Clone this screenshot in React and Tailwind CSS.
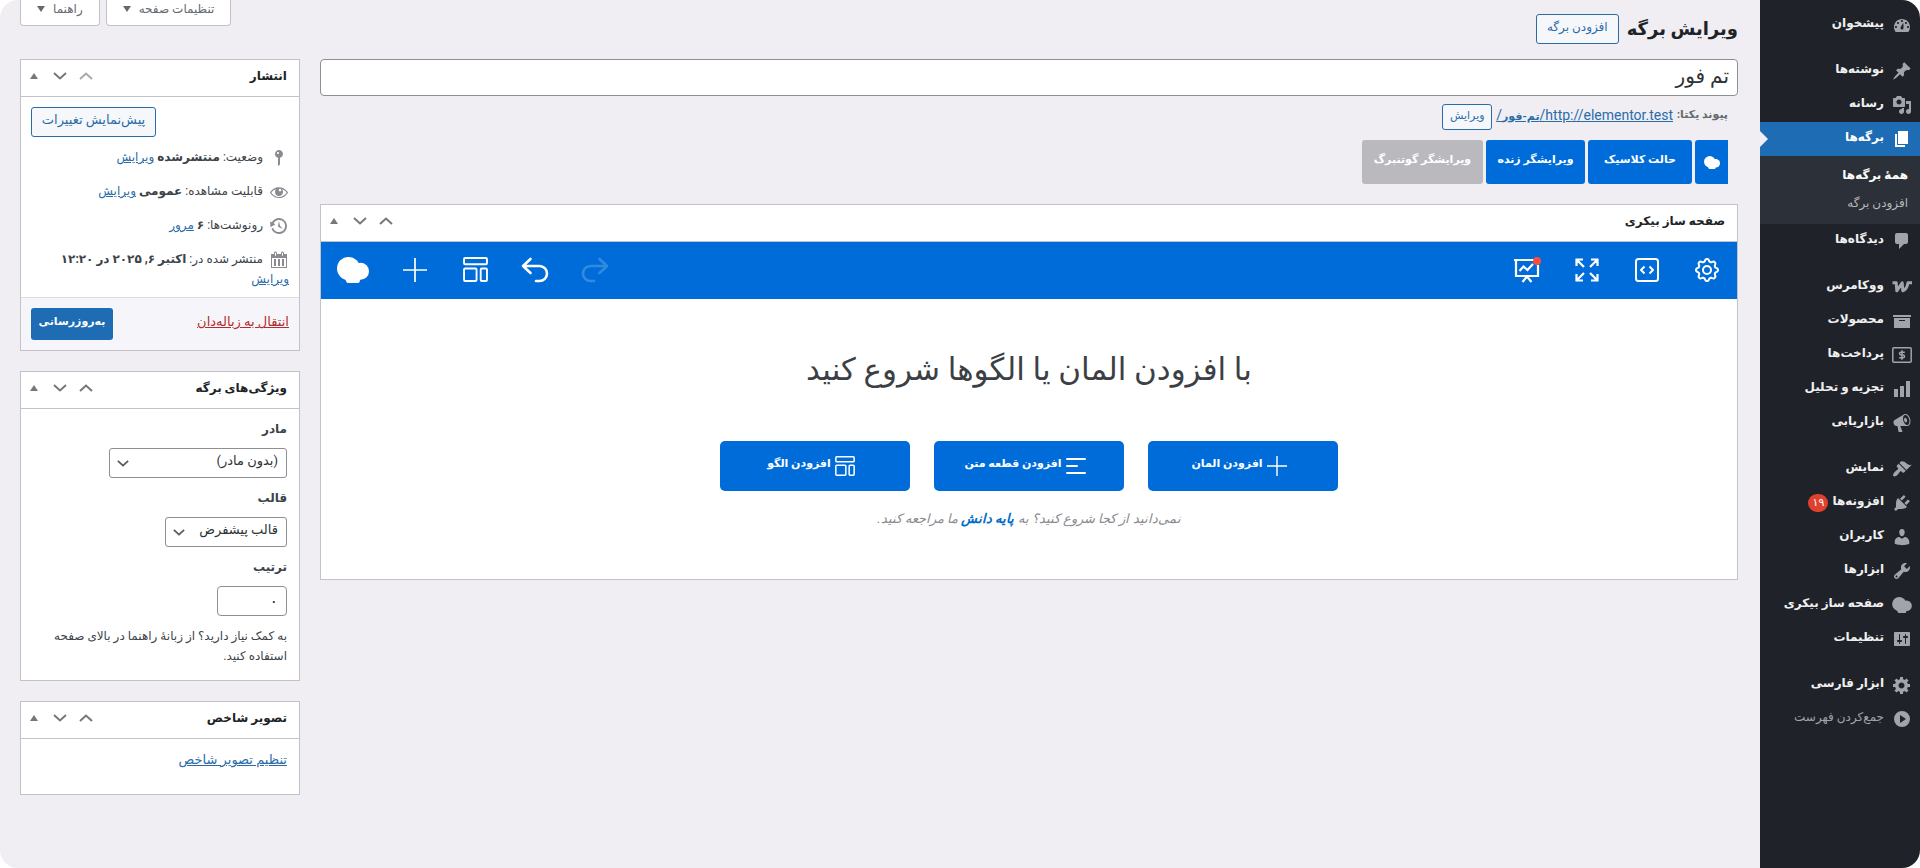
import { useState } from "react"

const dashicons = {
    dashboard: "M3.76 17h12.48A7.96 7.96 0 0 0 18 12c0-4.41-3.58-8-8-8s-8 3.59-8 8c0 1.9.66 3.65 1.76 5zM10 5c.55 0 1 .45 1 1s-.45 1-1 1-1-.45-1-1 .45-1 1-1zM6 7c.55 0 1 .45 1 1s-.45 1-1 1-1-.45-1-1 .45-1 1-1zm8 0c.55 0 1 .45 1 1s-.45 1-1 1-1-.45-1-1 .45-1 1-1zm-2.6.8c0 2.3.1 4.1.1 5.2a1.5 1.5 0 1 1-2.9-.5c.4-1.2 1.5-2.7 2.8-4.7zM4 11c.55 0 1 .45 1 1s-.45 1-1 1-1-.45-1-1 .45-1 1-1zm12 0c.55 0 1 .45 1 1s-.45 1-1 1-1-.45-1-1 .45-1 1-1z",
    post: "M10.44 3.02l1.82-1.82 6.36 6.35-1.83 1.82c-1.05-.68-2.48-.57-3.41.36l-.75.75c-.92.93-1.04 2.35-.35 3.41l-1.83 1.82-2.41-2.41-2.8 2.79c-.42.42-3.38 2.71-3.8 2.29s1.86-3.39 2.28-3.81l2.79-2.79L4.1 9.36l1.83-1.82c1.05.69 2.48.57 3.4-.36l.75-.75c.93-.92 1.05-2.35.36-3.41z",
    media: "M13 11V4c0-.55-.45-1-1-1h-1.67L9 1H5L3.67 3H2c-.55 0-1 .45-1 1v7c0 .55.45 1 1 1h10c.55 0 1-.45 1-1zM7 4.5c1.38 0 2.5 1.12 2.5 2.5S8.38 9.5 7 9.5 4.5 8.38 4.5 7 5.62 4.5 7 4.5zM14 6h5v10.5c0 1.38-1.12 2.5-2.5 2.5S14 17.88 14 16.5s1.12-2.5 2.5-2.5c.17 0 .34.02.5.05V9h-3V6zm-4 8.05V13h2v3.5c0 1.38-1.12 2.5-2.5 2.5S7 17.88 7 16.5 8.12 14 9.5 14c.17 0 .34.02.5.05z",
    page: "M6 15V2h10v13H6zm-1 1h8v2H3V5h2v11z",
    comments: "M5 2h9c1.1 0 2 .9 2 2v7c0 1.1-.9 2-2 2h-2l-5 5v-5H5c-1.1 0-2-.9-2-2V4c0-1.1.9-2 2-2z",
    archive: "M19 4v2H1V4h18zM2 7h16v10H2V7zm11 3V9H7v1h6z",
    chart: "M18 18V2h-4v16h4zm-6 0V7H8v11h4zm-6 0v-8H2v8h4z",
    megaphone: "M18.15 5.94c.46 1.62.38 3.22-.02 4.48-.42 1.28-1.26 2.18-2.3 2.48-.16.06-.26.06-.4.06-.06.02-.12.02-.18.02-.06.02-.14.02-.22.02h-6.8l2.22 5.5c.02.14-.06.26-.14.34-.08.1-.24.16-.34.16H6.95c-.1 0-.26-.06-.34-.16-.08-.08-.16-.2-.14-.34l-1-5.5H4.25l-.02-.02c-.5.06-1.08-.18-1.54-.62s-.88-1.08-1.06-1.88c-.24-.8-.2-1.56-.02-2.2.18-.62.58-1.08 1.06-1.3l.02-.02 9-5.4c.1-.06.18-.1.24-.16.06-.04.14-.08.24-.12.16-.08.28-.12.5-.18 1.04-.3 2.24.1 3.22.98s1.84 2.24 2.26 3.86zm-2.58 5.98h-.02c.4-.1.74-.34 1.04-.7.58-.7.86-1.76.86-3.04 0-.64-.1-1.3-.28-1.98-.34-1.36-1.02-2.5-1.78-3.24s-1.68-1.1-2.46-.88c-.82.22-1.4.96-1.7 2-.32 1.04-.28 2.36.06 3.72.38 1.36 1 2.5 1.8 3.24.78.74 1.62 1.1 2.48.88zm-2.54-7.08c.22-.04.42-.02.62.04.38.16.76.48 1.02 1s.42 1.2.42 1.78c0 .3-.04.56-.12.8-.18.48-.44.84-.86.94-.34.1-.8-.06-1.14-.4s-.64-.86-.78-1.5c-.18-.62-.12-1.24.02-1.72s.48-.84.82-.94z",
    appearance: "M14.48 11.06L7.41 3.99l1.5-1.5c.5-.56 2.3-.47 3.51.32 1.21.8 1.43 1.28 2.91 2.1 1.18.64 2.45 1.26 4.45.85zm-.71.71L6.7 4.7 4.93 6.47c-.39.39-.39 1.02 0 1.41l1.06 1.06c.39.39.39 1.03 0 1.42-.6.6-1.43 1.11-2.21 1.69-.35.26-.7.53-1.01.84C1.43 14.23.4 16.08 1.4 17.07c.99 1 2.84-.03 4.18-1.36.31-.31.58-.66.85-1.02.57-.78 1.08-1.61 1.69-2.21.39-.39 1.02-.39 1.41 0l1.06 1.06c.39.39 1.02.39 1.41 0z",
    plugins: "M13.11 4.36L9.87 7.6 8 5.73l3.24-3.24c.35-.34 1.05-.2 1.56.32.52.51.66 1.21.31 1.55zm-8 1.77l.91-1.12 9.01 9.01-1.19.84c-.71.71-2.63 1.16-3.82 1.16H6.14L4.9 17.26c-.59.59-1.54.59-2.12 0-.59-.58-.59-1.53 0-2.12l1.24-1.24v-3.88c0-1.13.4-3.19 1.09-3.89zm7.26 3.97l3.24-3.24c.34-.35 1.04-.21 1.55.31.52.51.66 1.21.31 1.55l-3.24 3.25z",
    users: "M10 9.25c-2.27 0-2.73-3.44-2.73-3.44C7 4.02 7.82 2 9.97 2c2.16 0 2.98 2.02 2.71 3.81 0 0-.41 3.44-2.68 3.44zm0 2.57L12.72 10c2.39 0 4.52 2.33 4.52 4.53v2.49s-3.65 1.13-7.24 1.13c-3.65 0-7.24-1.13-7.24-1.13v-2.49c0-2.25 1.94-4.48 4.47-4.48z",
    tools: "M16.68 9.77c-1.34 1.34-3.3 1.67-4.95.99l-5.41 6.52c-.99.99-2.59.99-3.58 0s-.99-2.59 0-3.57l6.52-5.42c-.68-1.65-.35-3.61.99-4.95 1.28-1.28 3.12-1.62 4.72-1.06l-2.89 2.89 2.82 2.82 2.86-2.87c.53 1.58.18 3.39-1.08 4.65zM3.81 16.21c.4.39 1.04.39 1.43 0 .4-.4.4-1.04 0-1.43-.39-.4-1.03-.4-1.43 0-.39.39-.39 1.03 0 1.43z",
    settings: "M18 16V4c0-.55-.45-1-1-1H3c-.55 0-1 .45-1 1v12c0 .55.45 1 1 1h14c.55 0 1-.45 1-1zM8 11h1c.55 0 1 .45 1 1s-.45 1-1 1H8v1.5c0 .28-.22.5-.5.5s-.5-.22-.5-.5V13H6c-.55 0-1-.45-1-1s.45-1 1-1h1V5.5c0-.28.22-.5.5-.5s.5.22.5.5V11zm5-2h-1c-.55 0-1-.45-1-1s.45-1 1-1h1V5.5c0-.28.22-.5.5-.5s.5.22.5.5V7h1c.55 0 1 .45 1 1s-.45 1-1 1h-1v5.5c0 .28-.22.5-.5.5s-.5-.22-.5-.5V9z",
    generic: "M18 12h-2.18c-.17.7-.44 1.35-.81 1.93l1.54 1.54-2.1 2.1-1.54-1.54c-.58.36-1.23.63-1.91.79V19H8v-2.18c-.68-.16-1.33-.43-1.91-.79l-1.54 1.54-2.12-2.12 1.54-1.54c-.36-.58-.63-1.23-.79-1.91H1V9.03h2.17c.16-.7.44-1.35.8-1.94L2.43 5.55l2.1-2.1 1.54 1.54c.58-.37 1.24-.64 1.93-.81V2h3v2.18c.68.16 1.33.43 1.91.79l1.54-1.54 2.12 2.12-1.54 1.54c.36.59.64 1.24.8 1.94H18V12zm-8.5 1.5c1.66 0 3-1.34 3-3s-1.34-3-3-3-3 1.34-3 3 1.34 3 3 3z",
    collapse: "M10 2a8 8 0 1 0 0 16 8 8 0 0 0 0-16zM8 6l6 4-6 4z",
    pin: "M14 6c0 1.86-1.28 3.41-3 3.86V16c0 1-2 2-2 2V9.86c-1.72-.45-3-2-3-3.86 0-2.21 1.79-4 4-4s4 1.79 4 4zM8 5c0 .55.45 1 1 1s1-.45 1-1-.45-1-1-1-1 .45-1 1z",
    eye: "M18.3 9.5C15 4.9 8.5 3.8 3.9 7.2c-1.2.9-2.2 2.1-3 3.4.2.4.5.8.8 1.2 3.3 4.6 9.6 5.6 14.2 2.4.9-.7 1.7-1.4 2.4-2.4.3-.4.5-.8.8-1.2-.3-.4-.5-.8-.8-1.1zm-8.2-2.3c.5-.5 1.3-.5 1.8 0s.5 1.3 0 1.8-1.3.5-1.8 0-.5-1.3 0-1.8zm-.1 7.7c-3.1 0-6-1.6-7.7-4.2C3.5 9 5.1 7.8 7 7.2c-.7.8-1 1.7-1 2.7 0 2.2 1.7 4.1 4 4.1 2.2 0 4.1-1.7 4.1-4v-.1c0-1-.4-2-1.1-2.7 1.9.6 3.5 1.8 4.7 3.5-1.7 2.6-4.6 4.2-7.7 4.2z",
    backup: "M13.65 2.88c3.93 2.01 5.48 6.84 3.47 10.77s-6.83 5.48-10.77 3.47c-1.87-.96-3.2-2.56-3.86-4.4l1.64-1.03c.45 1.57 1.52 2.95 3.08 3.76 3.01 1.54 6.69.35 8.23-2.66 1.55-3.01.36-6.69-2.65-8.24C9.78 3.01 6.1 4.2 4.56 7.21l1.88.97-4.95 3.08-.39-5.82 1.78.91C4.9 2.4 9.75.89 13.65 2.88zm-4.36 7.83C9.11 10.53 9 10.28 9 10c0-.07.03-.12.04-.19h-.01L10 5l.97 4.81L14 13l-4.5-2.12.02-.02c-.08-.04-.16-.09-.23-.15z",
    calendar: "M15 4h3v14H2V4h3V3c0-.83.67-1.5 1.5-1.5S8 2.17 8 3v1h4V3c0-.83.67-1.5 1.5-1.5S15 2.17 15 3v1zM6 3v2.5c0 .28.22.5.5.5s.5-.22.5-.5V3c0-.28-.22-.5-.5-.5S6 2.72 6 3zm7 0v2.5c0 .28.22.5.5.5s.5-.22.5-.5V3c0-.28-.22-.5-.5-.5s-.5.22-.5.5zm4 14V8H3v9h14zM7 16V9H5v7h2zm4 0V9H9v7h2zm4 0V9h-2v7h2z",
}

const menuGroups = [
    [{ label: "پیشخوان", icon: "dashboard" }],
    [
        { label: "نوشته‌ها", icon: "post" },
        { label: "رسانه", icon: "media" },
        { label: "برگه‌ها", icon: "page", submenu: ["همهٔ برگه‌ها", "افزودن برگه"] },
        { label: "دیدگاه‌ها", icon: "comments" },
    ],
    [
        { label: "ووکامرس", icon: "woo" },
        { label: "محصولات", icon: "archive" },
        { label: "پرداخت‌ها", icon: "payments" },
        { label: "تجزیه و تحلیل", icon: "chart" },
        { label: "بازاریابی", icon: "megaphone" },
    ],
    [
        { label: "نمایش", icon: "appearance" },
        { label: "افزونه‌ها", icon: "plugins", count: "۱۹" },
        { label: "کاربران", icon: "users" },
        { label: "ابزارها", icon: "tools" },
        { label: "صفحه ساز بیکری", icon: "bakery" },
        { label: "تنظیمات", icon: "settings" },
    ],
    [{ label: "ابزار فارسی", icon: "generic" }],
]

function Dashicon({ name, className }) {
    return (
        <svg viewBox="0 0 20 20" fill="currentColor" fillRule="evenodd" className={className}>
            <path d={dashicons[name]} />
        </svg>
    )
}

function BakeryLogo({ className }) {
    return (
        <svg viewBox="0 0 32 26" fill="currentColor" className={className}>
            <circle cx="11.5" cy="11.5" r="11.5" />
            <circle cx="23.5" cy="14.3" r="8.5" />
            <path d="M7 20h17l-1.5 5q-.3 1-1.3 1H11q-1 0-1.5-1z" />
        </svg>
    )
}

function MenuIcon({ name }) {
    if (name === "bakery") return <BakeryLogo className="w-5 h-4" />
    if (name === "woo") {
        return (
            <svg viewBox="0 0 20 12" fill="none" stroke="currentColor" strokeWidth="3" strokeLinejoin="round" className="w-5 h-3">
                <path d="M.5 1.8h3.7l.6 8 5.4-8 .6 8q4.200-1.500 5.200-8H20" />
            </svg>
        )
    }
    if (name === "payments") {
        return (
            <svg viewBox="0 0 20 16" fill="none" stroke="currentColor" strokeWidth="1.5" className="w-5 h-4">
                <rect x=".8" y=".8" width="18.4" height="14.4" rx="1" />
                <path d="M12.8 5.2H9q-1.5 0-1.5 1.4T9 8h2q1.5 0 1.5 1.4T11 10.8H7.2M10 3.3v9.4" />
            </svg>
        )
    }
    return <Dashicon name={name} className="w-5 h-5" />
}

function MenuItem({ item }) {
    const active = Boolean(item.submenu)
    return (
        <li>
            <a href="#" className={active ? "relative flex items-center h-[34px] bg-[#1d6cb4] text-white" : "flex items-center h-[34px] text-[#f0f0f1]"}>
                <span className={active ? "w-9 flex justify-center text-white" : "w-9 flex justify-center text-[#a0a4ab]"}>
                    <MenuIcon name={item.icon} />
                </span>
                <span className="text-xs font-semibold whitespace-nowrap pb-1">{item.label}</span>
                {item.count && (
                    <span className="mr-1 w-5 h-[18px] rounded-full bg-[#e0412f] text-white text-[11px] leading-[18px] text-center">{item.count}</span>
                )}
                {active && <span className="absolute left-0 top-[9px] border-y-8 border-y-transparent border-l-8 border-l-[#f0eef3]"></span>}
            </a>
            {active && (
                <ul className="bg-[#2c3038] pt-[5px] pb-[7px] px-3">
                    {item.submenu.map((label, index) => (
                        <li key={label}>
                            <a href="#" className={index === 0 ? "flex items-center h-7 text-xs font-bold text-white" : "flex items-center h-7 text-xs text-[#b4b7bc]"}>{label}</a>
                        </li>
                    ))}
                </ul>
            )}
        </li>
    )
}

function AdminMenu() {
    return (
        <nav className="w-40 shrink-0 bg-[#1f2228] pt-2">
            {menuGroups.map((group, index) => (
                <ul key={index} className={index === menuGroups.length - 1 ? "" : "mb-3"}>
                    {group.map((item) => <MenuItem key={item.label} item={item} />)}
                </ul>
            ))}
            <button type="button" className="flex items-center h-[34px] text-[#a0a4ab]">
                <span className="w-9 flex justify-center"><Dashicon name="collapse" className="w-5 h-5" /></span>
                <span className="text-xs pb-1 whitespace-nowrap">جمع‌کردن فهرست</span>
            </button>
        </nav>
    )
}

function Chevron({ up, className }) {
    return (
        <svg viewBox="0 0 14 8" fill="none" stroke="currentColor" strokeWidth="2" className={className}>
            <path d={up ? "M1 7l6-5.5L13 7" : "M1 1l6 5.5L13 1"} />
        </svg>
    )
}

function Postbox({ title, firstBox, children }) {
    const [isOpen, setIsOpen] = useState(true)
    return (
        <section className="bg-white border border-[#c3c2c9]">
            <header className="flex items-center justify-between h-[37px] border-b border-[#c3c2c9] pr-3">
                <h2 className="text-xs font-semibold text-[#1d2327] pb-1">{title}</h2>
                <div className="flex items-center pb-1 text-[#77767a]">
                    <button type="button" aria-label="انتقال به بالا" className={firstBox ? "w-[26px] h-8 flex items-center justify-center text-[#a9a8ad]" : "w-[26px] h-8 flex items-center justify-center"}>
                        <Chevron up className="w-3.5 h-2" />
                    </button>
                    <button type="button" aria-label="انتقال به پایین" className="w-[26px] h-8 flex items-center justify-center">
                        <Chevron className="w-3.5 h-2" />
                    </button>
                    <button type="button" aria-label="بستن جعبه" onClick={() => setIsOpen(!isOpen)} className="w-[26px] h-8 flex items-center justify-center">
                        <svg viewBox="0 0 8 6" fill="currentColor" className="w-2 h-1.5"><path d="M4 0l4 6H0z" /></svg>
                    </button>
                </div>
            </header>
            {isOpen && children}
        </section>
    )
}

function TemplateIcon({ className }) {
    return (
        <svg viewBox="0 0 24 24" fill="none" stroke="currentColor" strokeWidth="1.8" className={className}>
            <rect x="1" y="1" width="22" height="6" rx="1" />
            <rect x="1" y="11" width="12" height="12" rx="1" />
            <rect x="17" y="11" width="6" height="12" rx="1" />
        </svg>
    )
}

function PlusIcon({ className }) {
    return (
        <svg viewBox="0 0 24 24" fill="none" stroke="currentColor" strokeWidth="1.7" className={className}>
            <path d="M12 0v24M0 12h24" />
        </svg>
    )
}

function TextIcon({ className }) {
    return (
        <svg viewBox="0 0 20 20" fill="none" stroke="currentColor" strokeWidth="2" strokeLinecap="round" className={className}>
            <path d="M1 3h18M1 10h10M1 17h18" />
        </svg>
    )
}

function UndoIcon({ className }) {
    return (
        <svg viewBox="0 0 28 26" fill="none" stroke="currentColor" strokeWidth="2.6" strokeLinecap="round" strokeLinejoin="round" className={className}>
            <path d="M9.5 2L2 9l7.5 7M2 9h16.5a7.5 7.5 0 0 1 0 15H15" />
        </svg>
    )
}

// eight soft teeth around the hub
const gearPoints = Array.from({ length: 96 }, (_, i) => {
    const angle = (i / 96) * Math.PI * 2
    const radius = 9.8 + 1.3 * Math.tanh(1.5 * Math.cos(8 * angle))
    return `${(12 + radius * Math.cos(angle)).toFixed(2)},${(12 + radius * Math.sin(angle)).toFixed(2)}`
}).join(" ")

function GearIcon() {
    return (
        <svg viewBox="0 0 24 24" fill="none" stroke="currentColor" strokeWidth="2" strokeLinejoin="round" className="w-6 h-6">
            <polygon points={gearPoints} />
            <circle cx="12" cy="12" r="4" />
        </svg>
    )
}

function CodeIcon() {
    return (
        <svg viewBox="0 0 24 24" fill="none" stroke="currentColor" strokeWidth="2" strokeLinejoin="round" className="w-6 h-6">
            <rect x="1" y="1" width="22" height="22" rx="2.5" />
            <path d="M9.5 8.5L6 12l3.5 3.5M14.5 8.5L18 12l-3.5 3.5" />
        </svg>
    )
}

function ExpandIcon() {
    return (
        <svg viewBox="0 0 24 24" fill="none" stroke="currentColor" strokeWidth="2.2" className="w-6 h-6">
            <path d="M1.5 8V1.5H8M1.5 1.5L9 9M16 1.5h6.5V8M22.5 1.5L15 9M1.5 16v6.5H8M1.5 22.5L9 15M22.5 16v6.5H16M22.5 22.5L15 15" />
        </svg>
    )
}

function BoardIcon() {
    return (
        <svg viewBox="0 0 28 26" fill="none" stroke="currentColor" strokeWidth="2.2" className="w-7 h-[26px]">
            <path d="M1 3h21M3 3v16h22V8M9.5 25l4.5-5.5 4.5 5.5" />
            <path d="M6.5 14l4-4.5 4 3.5L20 7" />
            <circle cx="24" cy="4" r="4" fill="#ff4b3e" stroke="none" />
        </svg>
    )
}

function ToolButton({ label, children, disabled }) {
    return (
        <button type="button" aria-label={label} disabled={disabled} className="w-[60px] h-[57px] pb-0.5 flex items-center justify-center disabled:opacity-20">
            {children}
        </button>
    )
}

function StartButton({ icon, label }) {
    return (
        <button type="button" className="w-[190px] h-[50px] pr-2 rounded-[5px] bg-[#006cd9] text-white flex items-center justify-center gap-1">
            {icon}
            <span className="text-[11px] font-semibold pb-1">{label}</span>
        </button>
    )
}

function PageBuilder() {
    return (
        <Postbox title="صفحه ساز بیکری">
            <div className="flex justify-between bg-[#006cd9] text-white">
                <div className="flex">
                    <ToolButton label="تنظیمات"><GearIcon /></ToolButton>
                    <ToolButton label="کد"><CodeIcon /></ToolButton>
                    <ToolButton label="تمام صفحه"><ExpandIcon /></ToolButton>
                    <ToolButton label="سئو"><BoardIcon /></ToolButton>
                </div>
                <div className="flex">
                    <ToolButton label="انجام دوباره" disabled><UndoIcon className="w-7 h-[26px] -scale-x-100" /></ToolButton>
                    <ToolButton label="واگرد"><UndoIcon className="w-7 h-[26px]" /></ToolButton>
                    <ToolButton label="الگوها"><TemplateIcon className="w-[25px] h-[25px]" /></ToolButton>
                    <ToolButton label="افزودن"><PlusIcon className="w-6 h-6" /></ToolButton>
                    <a href="#" aria-label="بیکری" className="w-16 h-[57px] pb-0.5 flex items-center justify-center"><BakeryLogo className="w-8 h-[26px]" /></a>
                </div>
            </div>
            <div className="flex flex-col items-center py-12">
                <h3 className="text-[31px] leading-[46px] text-[#3c4045]">با افزودن المان یا الگوها شروع کنید</h3>
                <div className="flex gap-6 mt-12">
                    <StartButton icon={<PlusIcon className="w-5 h-5" />} label="افزودن المان" />
                    <StartButton icon={<TextIcon className="w-5 h-5" />} label="افزودن قطعه متن" />
                    <StartButton icon={<TemplateIcon className="w-5 h-5" />} label="افزودن الگو" />
                </div>
                <p className="mt-4 text-[13px] leading-6 italic text-[#8d8a90]">
                    نمی‌دانید از کجا شروع کنید؟ به <a href="#" className="font-bold text-[#006cc9]">پایه دانش</a> ما مراجعه کنید.
                </p>
            </div>
        </Postbox>
    )
}

function PublishRow({ icon, label, value, link, wrapLink }) {
    return (
        <div className="pt-1.5 pb-2 px-2.5 text-xs leading-5">
            <Dashicon name={icon} className="inline-block align-middle w-5 h-5 -my-1 ml-1.5 text-[#8c8a90]" />
            {label} <strong>{value}</strong>{wrapLink ? <br /> : " "}
            <a href="#" className="text-[#2a6ca8] underline">{link}</a>
        </div>
    )
}

function PublishBox() {
    return (
        <Postbox title="انتشار" firstBox>
            <div className="text-[#3c434a]">
                <div className="flex justify-end px-2.5 pt-2.5 pb-1">
                    <button type="button" className="h-[30px] w-[125px] rounded-[3px] border border-[#2a6ca8] bg-[#f6f7fb] text-[#2a6ca8] text-[13px] pb-1">پیش‌نمایش تغییرات</button>
                </div>
                <PublishRow icon="pin" label="وضعیت:" value="منتشرشده" link="ویرایش" />
                <PublishRow icon="eye" label="قابلیت مشاهده:" value="عمومی" link="ویرایش" />
                <PublishRow icon="backup" label="رونوشت‌ها:" value="۶" link="مرور" />
                <PublishRow icon="calendar" label="منتشر شده در:" value="اکتبر ۶, ۲۰۲۵ در ۱۲:۲۰" link="ویرایش" wrapLink />
            </div>
            <div className="flex items-center justify-between h-[53px] px-2.5 border-t border-[#dcdbe0] bg-[#f6f5f9]">
                <a href="#" className="text-[13px] text-[#b32d2e] underline pb-1">انتقال به زباله‌دان</a>
                <button type="button" className="h-8 w-[82px] rounded-[3px] bg-[#1d6cb4] text-white text-[11px] font-semibold pb-1">به‌روزرسانی</button>
            </div>
        </Postbox>
    )
}

function SelectField({ id, label, option, width }) {
    return (
        <>
            <label htmlFor={id} className="block h-[39px] pt-2.5 text-xs leading-5 font-bold text-[#3c434a]">{label}</label>
            <div className={width}>
                <div className="relative">
                    <select id={id} className="appearance-none w-full h-[30px] rounded-[3px] border border-[#8c8f94] bg-white pr-2 pl-6 pb-1 text-[13px] text-[#2c3338]">
                        <option>{option}</option>
                    </select>
                    <Chevron className="absolute left-2 top-3 w-3 h-[7px] pointer-events-none text-[#55585c]" />
                </div>
            </div>
        </>
    )
}

function AttributesBox() {
    return (
        <Postbox title="ویژگی‌های برگه">
            <div className="px-3 pb-2.5">
                <SelectField id="parent" label="مادر" option="(بدون مادر)" width="w-[178px]" />
                <SelectField id="template" label="قالب" option="قالب پیشفرض" width="w-[122px]" />
                <label htmlFor="order" className="block h-[39px] pt-2.5 text-xs leading-5 font-bold text-[#3c434a]">ترتیب</label>
                <input id="order" type="text" defaultValue="۰" className="block w-[70px] h-[30px] rounded border border-[#8c8f94] bg-white px-2 text-base text-[#2c3338]" />
                <p className="mt-2.5 mb-1 text-xs leading-5 text-[#3c434a]">به کمک نیاز دارید؟ از زبانهٔ راهنما در بالای صفحه استفاده کنید.</p>
            </div>
        </Postbox>
    )
}

function ScreenTab({ label }) {
    return (
        <button type="button" className="flex items-center gap-2 h-[26px] px-4 pb-2 rounded-b border border-t-0 border-[#c3c2c9] bg-white text-xs leading-4 text-[#646970]">
            {label}
            <svg viewBox="0 0 8 6" fill="currentColor" className="w-2 h-1.5"><path d="M0 0h8L4 6z" /></svg>
        </button>
    )
}

export default function App() {
    return (
        <div dir="rtl" className="bg-white text-[#3c434a] font-[Roboto,'DejaVu_Sans',sans-serif]">
            <div className="min-h-screen flex rounded-[18px] overflow-hidden bg-[#f0eef3]">
                <AdminMenu />
                <main className="flex-1 min-w-0 pr-[22px] pl-5 pb-10">
                    <div className="flex items-start justify-between h-[59px]">
                        <div className="flex items-center gap-2 pt-3.5">
                            <h1 className="text-lg leading-[30px] font-semibold text-[#1d2327]">ویرایش برگه</h1>
                            <a href="#" className="h-[30px] px-2.5 rounded-[3px] border border-[#2a6ca8] bg-[#f6f7fb] text-xs leading-6 text-[#2a6ca8]">افزودن برگه</a>
                        </div>
                        <div className="flex gap-1.5">
                            <ScreenTab label="تنظیمات صفحه" />
                            <ScreenTab label="راهنما" />
                        </div>
                    </div>
                    <div className="grid grid-cols-[minmax(0,1fr)_280px] gap-5 items-start">
                        <div>
                            <input type="text" aria-label="عنوان" defaultValue="تم فور" className="block w-full h-[37px] rounded border border-[#8c8f94] bg-white px-2 pb-1 text-xl text-[#2c3338]" />
                            <div className="flex items-center gap-1 h-[26px] mt-2 px-2.5 text-[#646970]">
                                <strong className="text-[11px] pb-1">پیوند یکتا:</strong>
                                <a href="#" className="text-sm text-[#2a6ca8] underline pb-1">http://elementor.test/<strong className="text-[11px]">تم-فور</strong>/</a>
                                <button type="button" className="h-[26px] w-[50px] rounded-[3px] border border-[#2a6ca8] bg-[#f6f7fb] text-[#2a6ca8] text-[11px] pb-0.5">ویرایش</button>
                            </div>
                            <div className="flex gap-[3px] mt-2.5 mb-5 px-2.5 text-white text-[11px] font-semibold">
                                <button type="button" aria-label="بیکری" className="w-[33px] h-11 rounded-l-[3px] bg-[#006cd9] flex items-center justify-center"><BakeryLogo className="w-4 h-[13px]" /></button>
                                <button type="button" className="w-[104px] h-11 rounded-[3px] bg-[#006cd9] pb-1">حالت کلاسیک</button>
                                <button type="button" className="w-[99px] h-11 rounded-[3px] bg-[#006cd9] pb-1">ویرایشگر زنده</button>
                                <button type="button" className="w-[121px] h-11 rounded-[3px] bg-[#bab9be] pb-1">ویرایشگر گوتنبرگ</button>
                            </div>
                            <PageBuilder />
                        </div>
                        <aside className="flex flex-col gap-5">
                            <PublishBox />
                            <AttributesBox />
                            <Postbox title="تصویر شاخص">
                                <div className="px-3 pt-2.5 pb-6 leading-5">
                                    <a href="#" className="text-[13px] text-[#2a6ca8] underline">تنظیم تصویر شاخص</a>
                                </div>
                            </Postbox>
                        </aside>
                    </div>
                </main>
            </div>
        </div>
    )
}
